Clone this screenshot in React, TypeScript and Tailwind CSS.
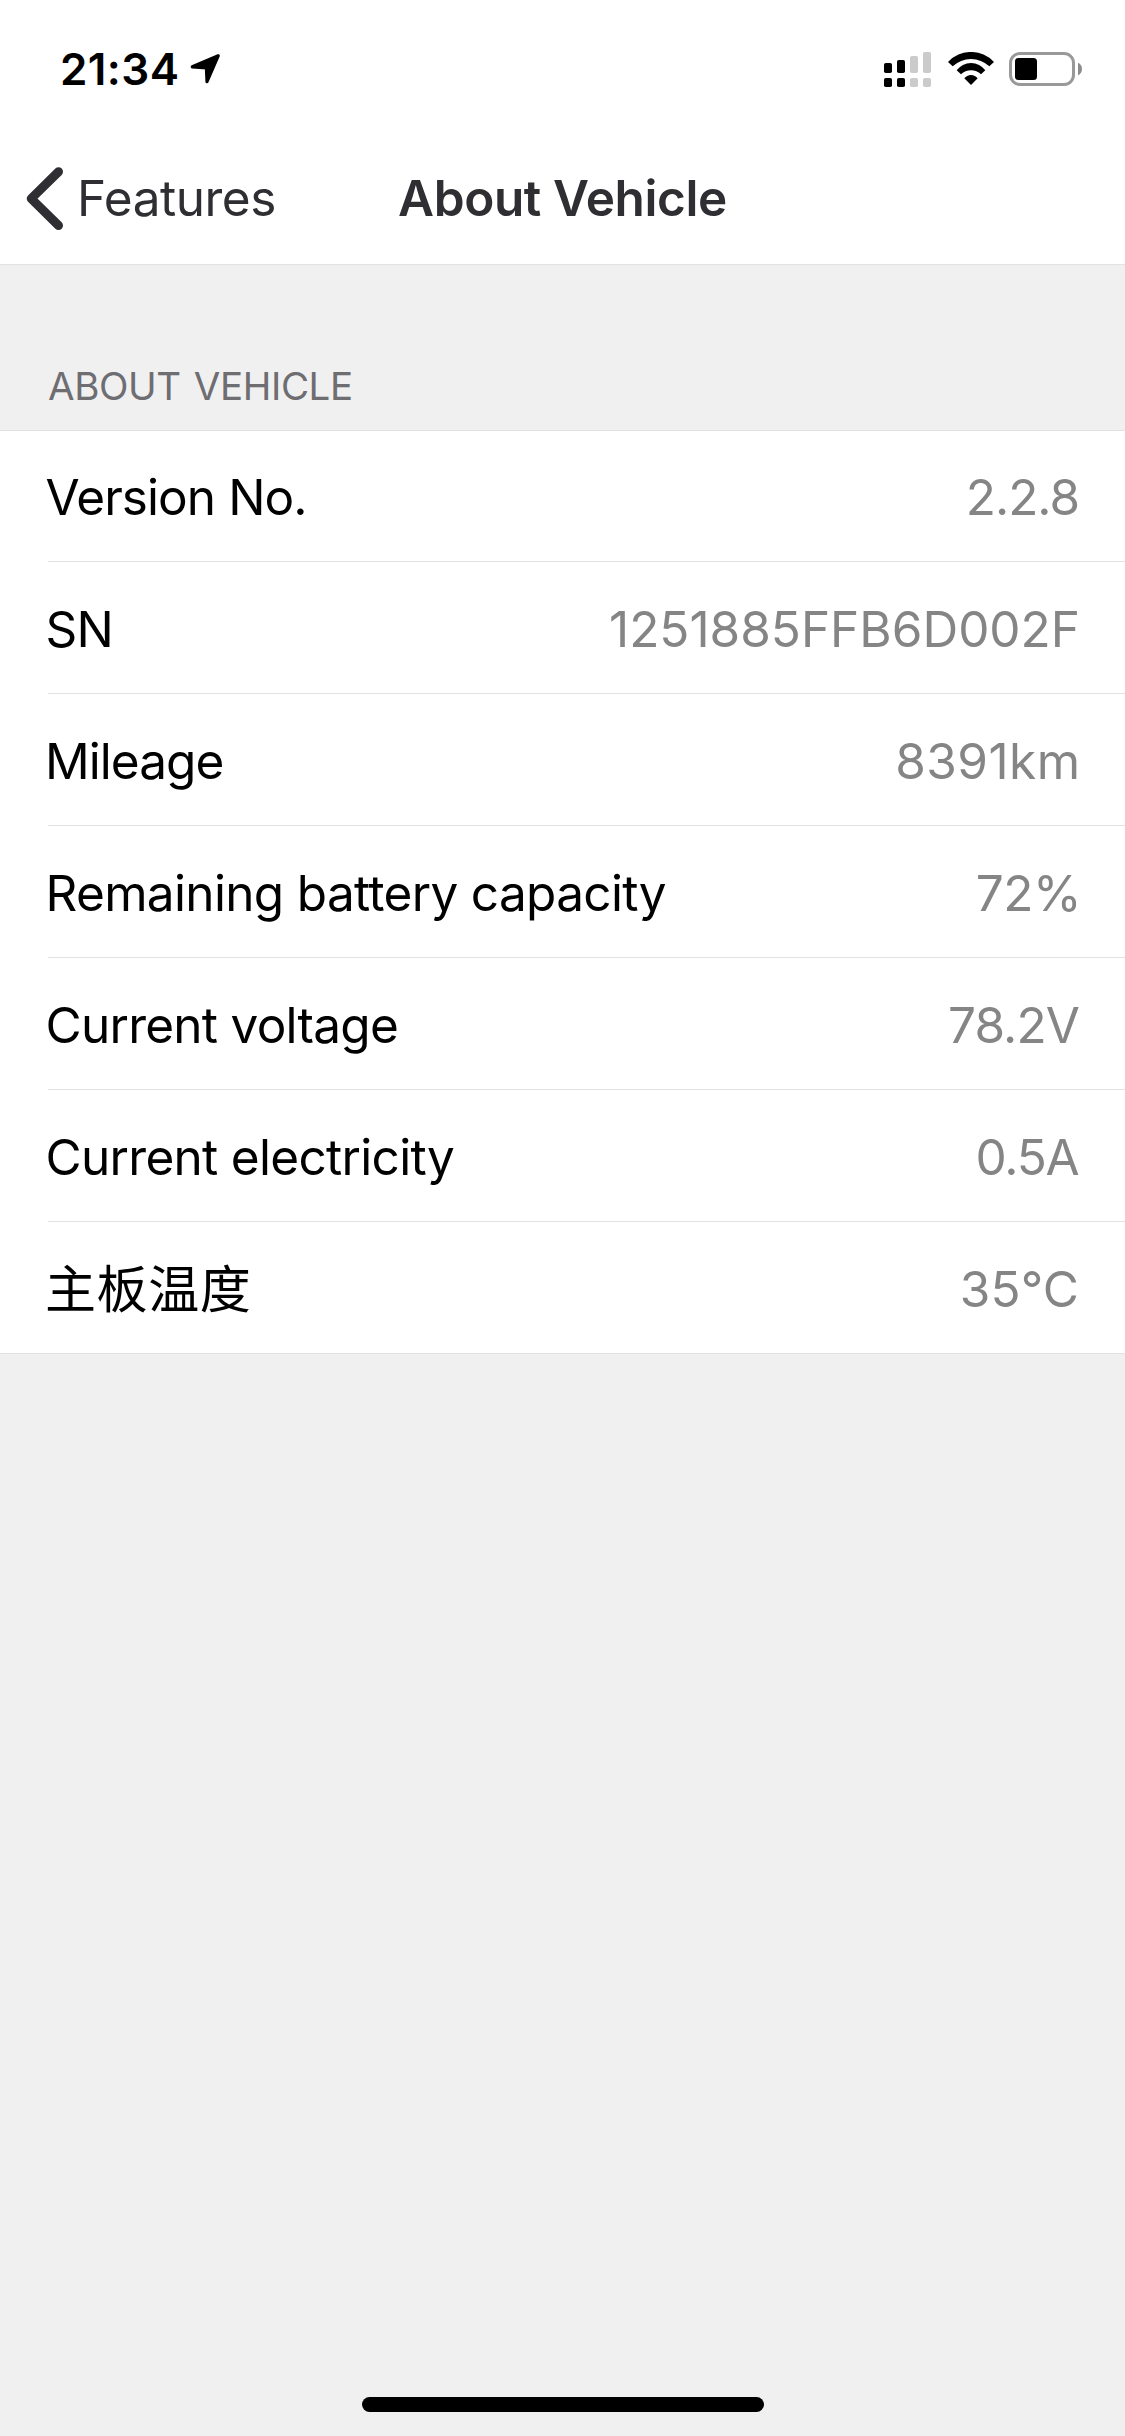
type Row = {
  label: string;
  value: string;
  labelClass: string;
  valueClass: string;
};

const rows: Row[] = [
  { label: "Version No.", value: "2.2.8", labelClass: "pl-[45.5px] tracking-[-0.93px]", valueClass: "tracking-[-1.05px] pr-[46px]" },
  { label: "SN", value: "1251885FFB6D002F", labelClass: "pl-[45.5px] tracking-[-0.76px]", valueClass: "tracking-[0px] pr-[45px]" },
  { label: "Mileage", value: "8391km", labelClass: "pl-[45px] tracking-[-0.95px]", valueClass: "tracking-[0.46px] pr-[44.5px]" },
  { label: "Remaining battery capacity", value: "72%", labelClass: "pl-[45.5px] tracking-[-0.66px]", valueClass: "tracking-[-0.5px] pr-[44px]" },
  { label: "Current voltage", value: "78.2V", labelClass: "pl-[45.5px] tracking-[-0.73px]", valueClass: "tracking-[-0.89px] pr-[46px]" },
  { label: "Current electricity", value: "0.5A", labelClass: "pl-[45.5px] tracking-[-0.69px]", valueClass: "tracking-[-1.2px] pr-[46.5px]" },
  { label: "主板温度", value: "35°C", labelClass: "pl-[45px] pt-px text-[51px] tracking-[0.6px]", valueClass: "tracking-[0.1px] pr-[46px]" },
];

function LocationIcon() {
  return (
    <svg width="32" height="32" viewBox="189 53 32 32" className="block">
      <path
        d="M218.2 55.8 192.3 66.8 206.4 67.8 207 81.7Z"
        fill="#000"
        stroke="#000"
        strokeWidth="3.2"
        strokeLinejoin="round"
      />
    </svg>
  );
}

function SignalIcon() {
  return (
    <svg width="47" height="35" viewBox="0 0 47 35" className="block">
      <g fill="#000">
        <rect x="0" y="11" width="8" height="10" rx="1.8" />
        <rect x="0" y="26" width="8" height="9" rx="1.8" />
        <rect x="13" y="8" width="8" height="13" rx="1.8" />
        <rect x="13" y="26" width="8" height="9" rx="1.8" />
      </g>
      <g fill="#cbcbcb">
        <rect x="26" y="4" width="8" height="17" rx="1.8" />
        <rect x="26" y="26" width="8" height="9" rx="1.8" />
        <rect x="39" y="0" width="8" height="21" rx="1.8" />
        <rect x="39" y="26" width="8" height="9" rx="1.8" />
      </g>
    </svg>
  );
}

function WifiIcon() {
  return (
    <svg width="46" height="33" viewBox="264 66 138 99" className="block">
      <path d="M264 96A94 94 0 0 1 402 96L388 109A80 80 0 0 0 278 109Z" />
      <path d="M290 121A53 53 0 0 1 376 121L363 133A43.5 43.5 0 0 0 303 133Z" />
      <path d="M313 145A25 25 0 0 1 353 145L333 165Z" />
    </svg>
  );
}

function BatteryIcon() {
  return (
    <svg width="73" height="34" viewBox="0 0 73 34" className="block">
      <rect x="1.5" y="1.5" width="63" height="31" rx="9.5" fill="none" stroke="#999" strokeWidth="3" />
      <rect x="6" y="6" width="22" height="22" rx="3.5" fill="#000" />
      <path d="M69 10.8C71.6 11.8 73 14.2 73 17S71.6 22.2 69 23.2Z" fill="#8c8c8c" />
    </svg>
  );
}

function BackIcon() {
  return (
    <svg width="38" height="64" viewBox="26 167 38 64" className="block">
      <path
        d="M58.5 171.7 31.2 198.6 58.5 225.5"
        fill="none"
        stroke="#2f2f33"
        strokeWidth="9"
        strokeLinecap="round"
        strokeLinejoin="round"
      />
    </svg>
  );
}

export default function App() {
  return (
    <div className="flex h-[2436px] w-[1125px] flex-col bg-[#f0f0f0] font-['Inter','Noto_Sans_CJK_SC',sans-serif] text-black">
      <header className="h-[265px] border-b border-[#e2e2e3] bg-white">
        <div className="flex h-[132px] items-start justify-between">
          <div className="flex pl-[60px] pt-[42px]">
            <span className="w-[129px] text-[44px] font-semibold leading-[54px] tracking-[0.4px]">21:34</span>
            <div className="pt-[11px]">
              <LocationIcon />
            </div>
          </div>
          <div className="flex items-start pr-[43px] pt-[52px]">
            <SignalIcon />
            <div className="pl-[17px] pr-[15px]">
              <WifiIcon />
            </div>
            <BatteryIcon />
          </div>
        </div>
        <nav className="grid grid-cols-[1fr_auto_1fr] text-[49.5px] leading-[60px] text-[#2f2f33]">
          <button className="flex items-start pl-[26px]">
            <span className="pt-[35px]">
              <BackIcon />
            </span>
            <span className="pl-[13px] pt-[36px] tracking-[-0.48px]">Features</span>
          </button>
          <h1 className="pt-[36px] font-semibold tracking-[-0.4px]">About Vehicle</h1>
        </nav>
      </header>

      <main className="flex-1">
        <h2 className="h-[165px] pl-[48px] pt-[98px] text-[38.5px] leading-[46px] tracking-[-0.38px] [word-spacing:2.5px] text-[#6d6d72]">
          ABOUT VEHICLE
        </h2>
        <ul className="border-y border-[#e2e2e3] bg-white text-[49.5px] leading-[60px]">
          {rows.map((row, i) => (
            <li key={row.label} className={i === 0 || i === rows.length - 1 ? "h-[131px]" : "h-[132px]"}>
              <div className={i === 0 ? "flex h-[130px] justify-between pt-[36px]" : "flex h-[131px] justify-between pt-[37px]"}>
                <span className={`whitespace-nowrap ${row.labelClass}`}>{row.label}</span>
                <span className={`whitespace-nowrap text-[#868585] ${row.valueClass}`}>{row.value}</span>
              </div>
              {i < rows.length - 1 && <div className="ml-[48px] h-px bg-[#e2e2e3]" />}
            </li>
          ))}
        </ul>
      </main>

      <footer className="flex justify-center pb-[24px]">
        <div className="ml-px h-[15px] w-[402px] rounded-full bg-black" />
      </footer>
    </div>
  );
}
